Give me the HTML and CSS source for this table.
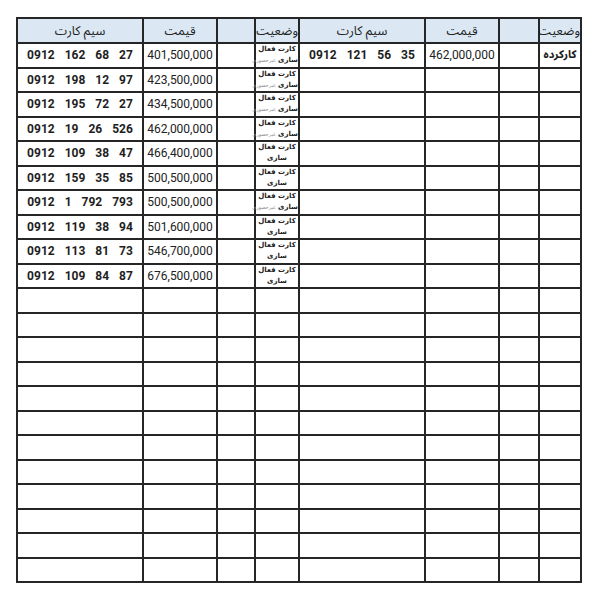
FILE: index.html
```html
<!DOCTYPE html>
<html lang="fa">
<head>
<meta charset="utf-8">
<title>سیم کارت</title>
<link rel="stylesheet" href="styles.css">
</head>
<body>
<table class="sheet">
  <colgroup>
    <col class="c-sim"><col class="c-price"><col class="c-empty"><col class="c-status">
    <col class="c-sim"><col class="c-price"><col class="c-empty2"><col class="c-status2">
  </colgroup>
  <thead>
    <tr>
      <th class="h-center">سیم کارت</th><th class="h-center">قیمت</th><th></th><th class="h-right">وضعیت</th>
      <th class="h-center">سیم کارت</th><th class="h-center">قیمت</th><th></th><th class="h-right">وضعیت</th>
    </tr>
  </thead>
  <tbody>
    <tr>
      <td class="sim"><span>0912</span><span>162</span><span>68</span><span>27</span></td>
      <td class="price">401,500,000</td><td></td>
      <td class="status"><div>کارت فعال</div><div>سازی <small>غیرحضوری</small></div></td>
      <td class="sim"><span>0912</span><span>121</span><span>56</span><span>35</span></td>
      <td class="price">462,000,000</td><td></td>
      <td class="used">کارکرده</td>
    </tr>
    <tr>
      <td class="sim"><span>0912</span><span>198</span><span>12</span><span>97</span></td>
      <td class="price">423,500,000</td><td></td>
      <td class="status"><div>کارت فعال</div><div>سازی <small>غیرحضوری</small></div></td>
      <td></td><td></td><td></td><td></td>
    </tr>
    <tr>
      <td class="sim"><span>0912</span><span>195</span><span>72</span><span>27</span></td>
      <td class="price">434,500,000</td><td></td>
      <td class="status"><div>کارت فعال</div><div>سازی <small>غیرحضوری</small></div></td>
      <td></td><td></td><td></td><td></td>
    </tr>
    <tr>
      <td class="sim"><span>0912</span><span>19</span><span>26</span><span>526</span></td>
      <td class="price">462,000,000</td><td></td>
      <td class="status"><div>کارت فعال</div><div>سازی <small>غیرحضوری</small></div></td>
      <td></td><td></td><td></td><td></td>
    </tr>
    <tr>
      <td class="sim"><span>0912</span><span>109</span><span>38</span><span>47</span></td>
      <td class="price">466,400,000</td><td></td>
      <td class="status"><div>کارت فعال</div><div>سازی</div></td>
      <td></td><td></td><td></td><td></td>
    </tr>
    <tr>
      <td class="sim"><span>0912</span><span>159</span><span>35</span><span>85</span></td>
      <td class="price">500,500,000</td><td></td>
      <td class="status"><div>کارت فعال</div><div>سازی</div></td>
      <td></td><td></td><td></td><td></td>
    </tr>
    <tr>
      <td class="sim"><span>0912</span><span>1</span><span>792</span><span>793</span></td>
      <td class="price">500,500,000</td><td></td>
      <td class="status"><div>کارت فعال</div><div>سازی <small>غیرحضوری</small></div></td>
      <td></td><td></td><td></td><td></td>
    </tr>
    <tr>
      <td class="sim"><span>0912</span><span>119</span><span>38</span><span>94</span></td>
      <td class="price">501,600,000</td><td></td>
      <td class="status"><div>کارت فعال</div><div>سازی</div></td>
      <td></td><td></td><td></td><td></td>
    </tr>
    <tr>
      <td class="sim"><span>0912</span><span>113</span><span>81</span><span>73</span></td>
      <td class="price">546,700,000</td><td></td>
      <td class="status"><div>کارت فعال</div><div>سازی</div></td>
      <td></td><td></td><td></td><td></td>
    </tr>
    <tr>
      <td class="sim"><span>0912</span><span>109</span><span>84</span><span>87</span></td>
      <td class="price">676,500,000</td><td></td>
      <td class="status"><div>کارت فعال</div><div>سازی</div></td>
      <td></td><td></td><td></td><td></td>
    </tr>
    <tr><td></td><td></td><td></td><td></td><td></td><td></td><td></td><td></td></tr>
    <tr><td></td><td></td><td></td><td></td><td></td><td></td><td></td><td></td></tr>
    <tr><td></td><td></td><td></td><td></td><td></td><td></td><td></td><td></td></tr>
    <tr><td></td><td></td><td></td><td></td><td></td><td></td><td></td><td></td></tr>
    <tr><td></td><td></td><td></td><td></td><td></td><td></td><td></td><td></td></tr>
    <tr><td></td><td></td><td></td><td></td><td></td><td></td><td></td><td></td></tr>
    <tr><td></td><td></td><td></td><td></td><td></td><td></td><td></td><td></td></tr>
    <tr><td></td><td></td><td></td><td></td><td></td><td></td><td></td><td></td></tr>
    <tr><td></td><td></td><td></td><td></td><td></td><td></td><td></td><td></td></tr>
    <tr><td></td><td></td><td></td><td></td><td></td><td></td><td></td><td></td></tr>
    <tr><td></td><td></td><td></td><td></td><td></td><td></td><td></td><td></td></tr>
    <tr><td></td><td></td><td></td><td></td><td></td><td></td><td></td><td></td></tr>
  </tbody>
</table>
</body>
</html>
```

FILE: styles.css
```css
html, body {
  margin: 0;
  padding: 0;
  background: #ffffff;
}

body {
  font-family: Roboto, "Noto Sans Arabic", "DejaVu Sans", sans-serif;
  color: #1a1a1a;
}

.sheet {
  margin: 17px 0 0 16px;
  width: 564px;
  border-collapse: collapse;
  table-layout: fixed;
}

.c-sim { width: 126px; }
.c-price { width: 74px; }
.c-empty { width: 38px; }
.c-status { width: 44px; }
.c-empty2 { width: 40px; }
.c-status2 { width: 42px; }

.sheet th,
.sheet td {
  border: 2px solid #262626;
  padding: 0;
  white-space: nowrap;
}

.sheet th {
  height: 23px;
  background: #dbe8f4;
  font-family: "Noto Sans Arabic", "DejaVu Sans", sans-serif;
  font-weight: normal;
  font-size: 12.5px;
  line-height: 14px;
  color: #222;
  direction: rtl;
}

.h-center { text-align: center; }
.h-right { text-align: right; padding-right: 1px; }

.sheet td {
  height: 22.5px;
  line-height: 14px;
}

.sim {
  font-weight: bold;
  font-size: 12px;
  color: #1e1e1e;
  text-align: center;
}

.sim span {
  display: inline-block;
}

.sim span + span {
  margin-left: 10px;
}

.price {
  font-size: 12px;
  text-align: center;
  color: #222;
}

.status {
  direction: rtl;
  text-align: center;
  font-family: "DejaVu Sans", sans-serif;
  font-weight: bold;
  font-size: 7px;
  vertical-align: middle;
}

.status div {
  height: 11px;
  line-height: 11px;
}

.status small {
  font-weight: normal;
  font-size: 5px;
  color: #8a8a8a;
}

.used {
  direction: rtl;
  text-align: center;
  font-family: "Noto Sans Arabic", "DejaVu Sans", sans-serif;
  font-weight: bold;
  font-size: 11px;
}
```
